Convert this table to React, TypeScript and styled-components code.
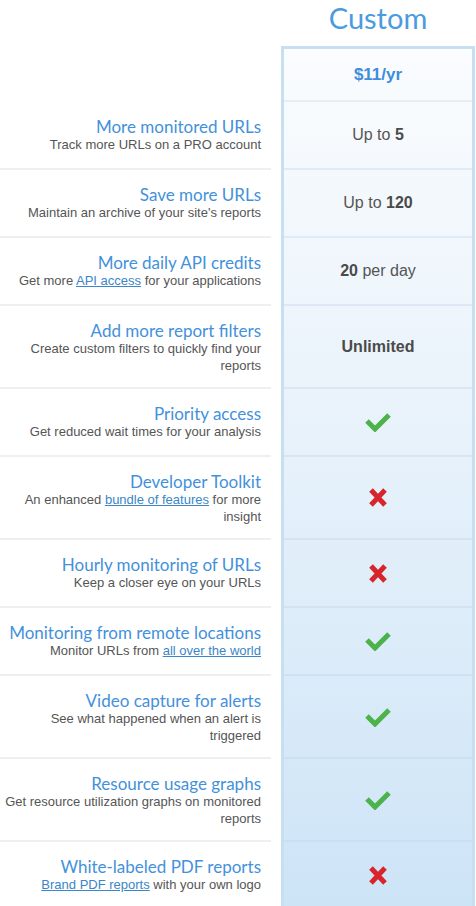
import React from "react";
import styled, { createGlobalStyle } from "styled-components";

const Global = createGlobalStyle`
  html, body { margin: 0; padding: 0; background: #ffffff; }
  body { font-family: "Liberation Sans", Arial, sans-serif; overflow: hidden; }
  * { box-sizing: border-box; }
`;

const Table = styled.div`
  display: grid;
  grid-template-columns: 271px 10px 194px;
  width: 476px;
`;

const ColumnBg = styled.div`
  grid-column: 3;
  grid-row: 2 / span 12;
  border: 3px solid #c6dff1;
  border-bottom: none;
  background: linear-gradient(to bottom, #fafcfe 0%, #eaf3fb 40%, #cde4f7 100%);
`;

const PlanTitle = styled.div`
  grid-column: 3;
  grid-row: 1;
  height: 46px;
  text-align: center;
  font-family: "Lato", "Open Sans", sans-serif;
  font-size: 29px;
  line-height: 35px;
  color: #4a9be0;
`;

const PriceCell = styled.div<{ $row: number }>`
  grid-column: 3;
  grid-row: ${(p) => p.$row};
  z-index: 1;
  margin: 3px 3px 0;
  height: 53px;
  border-bottom: 2px solid rgba(196, 214, 230, 0.35);
  display: flex;
  align-items: center;
  justify-content: center;
  font-weight: bold;
  font-size: 17px;
  color: #3f8ddb;
`;

const FeatureCell = styled.div<{ $row: number }>`
  grid-column: 1;
  grid-row: ${(p) => p.$row};
  min-height: 68px;
  padding: 15px 10px 13px 0;
  border-bottom: 2px solid #efefef;
  text-align: right;
`;

const FeatureTitle = styled.div`
  font-family: "Lato", "Open Sans", sans-serif;
  font-size: 17px;
  line-height: 19px;
  color: #4391db;
`;

const FeatureDesc = styled.div`
  font-size: 13px;
  line-height: 17px;
  color: #555555;
`;

const Link = styled.a`
  color: #3a86c8;
  text-decoration: underline;
`;

const ValueCell = styled.div<{ $row: number }>`
  grid-column: 3;
  grid-row: ${(p) => p.$row};
  z-index: 1;
  margin: 0 3px;
  border-bottom: 2px solid rgba(190, 210, 228, 0.35);
  display: flex;
  align-items: center;
  justify-content: center;
  font-size: 16px;
  color: #555555;

  b {
    color: #4a4a4a;
  }
`;

const Check = () => (
  <svg width="26" height="20" viewBox="0 0 26 20">
    <polyline points="2,9 10,17 24,3" fill="none" stroke="#4cb24a" strokeWidth="5" />
  </svg>
);

const Cross = () => (
  <svg width="20" height="19" viewBox="0 0 20 19">
    <path d="M3 2 L17 17 M17 2 L3 17" fill="none" stroke="#d8252c" strokeWidth="5" />
  </svg>
);

type Feature = {
  title: string;
  desc: React.ReactNode;
  value: React.ReactNode;
};

const features: Feature[] = [
  {
    title: "More monitored URLs",
    desc: "Track more URLs on a PRO account",
    value: (
      <span>
        Up to <b>5</b>
      </span>
    ),
  },
  {
    title: "Save more URLs",
    desc: "Maintain an archive of your site's reports",
    value: (
      <span>
        Up to <b>120</b>
      </span>
    ),
  },
  {
    title: "More daily API credits",
    desc: (
      <>
        Get more <Link href="#">API access</Link> for your applications
      </>
    ),
    value: (
      <span>
        <b>20</b> per day
      </span>
    ),
  },
  {
    title: "Add more report filters",
    desc: "Create custom filters to quickly find your reports",
    value: <b>Unlimited</b>,
  },
  {
    title: "Priority access",
    desc: "Get reduced wait times for your analysis",
    value: <Check />,
  },
  {
    title: "Developer Toolkit",
    desc: (
      <>
        An enhanced <Link href="#">bundle of features</Link> for more insight
      </>
    ),
    value: <Cross />,
  },
  {
    title: "Hourly monitoring of URLs",
    desc: "Keep a closer eye on your URLs",
    value: <Cross />,
  },
  {
    title: "Monitoring from remote locations",
    desc: (
      <>
        Monitor URLs from <Link href="#">all over the world</Link>
      </>
    ),
    value: <Check />,
  },
  {
    title: "Video capture for alerts",
    desc: "See what happened when an alert is triggered",
    value: <Check />,
  },
  {
    title: "Resource usage graphs",
    desc: "Get resource utilization graphs on monitored reports",
    value: <Check />,
  },
  {
    title: "White-labeled PDF reports",
    desc: (
      <>
        <Link href="#">Brand PDF reports</Link> with your own logo
      </>
    ),
    value: <Cross />,
  },
];

export default function App() {
  return (
    <>
      <Global />
      <Table>
        <PlanTitle>Custom</PlanTitle>
        <ColumnBg />
        <PriceCell $row={2}>$11/yr</PriceCell>
        {features.map((f, i) => (
          <React.Fragment key={f.title}>
            <FeatureCell $row={i + 3}>
              <FeatureTitle>{f.title}</FeatureTitle>
              <FeatureDesc>{f.desc}</FeatureDesc>
            </FeatureCell>
            <ValueCell $row={i + 3}>{f.value}</ValueCell>
          </React.Fragment>
        ))}
      </Table>
    </>
  );
}
